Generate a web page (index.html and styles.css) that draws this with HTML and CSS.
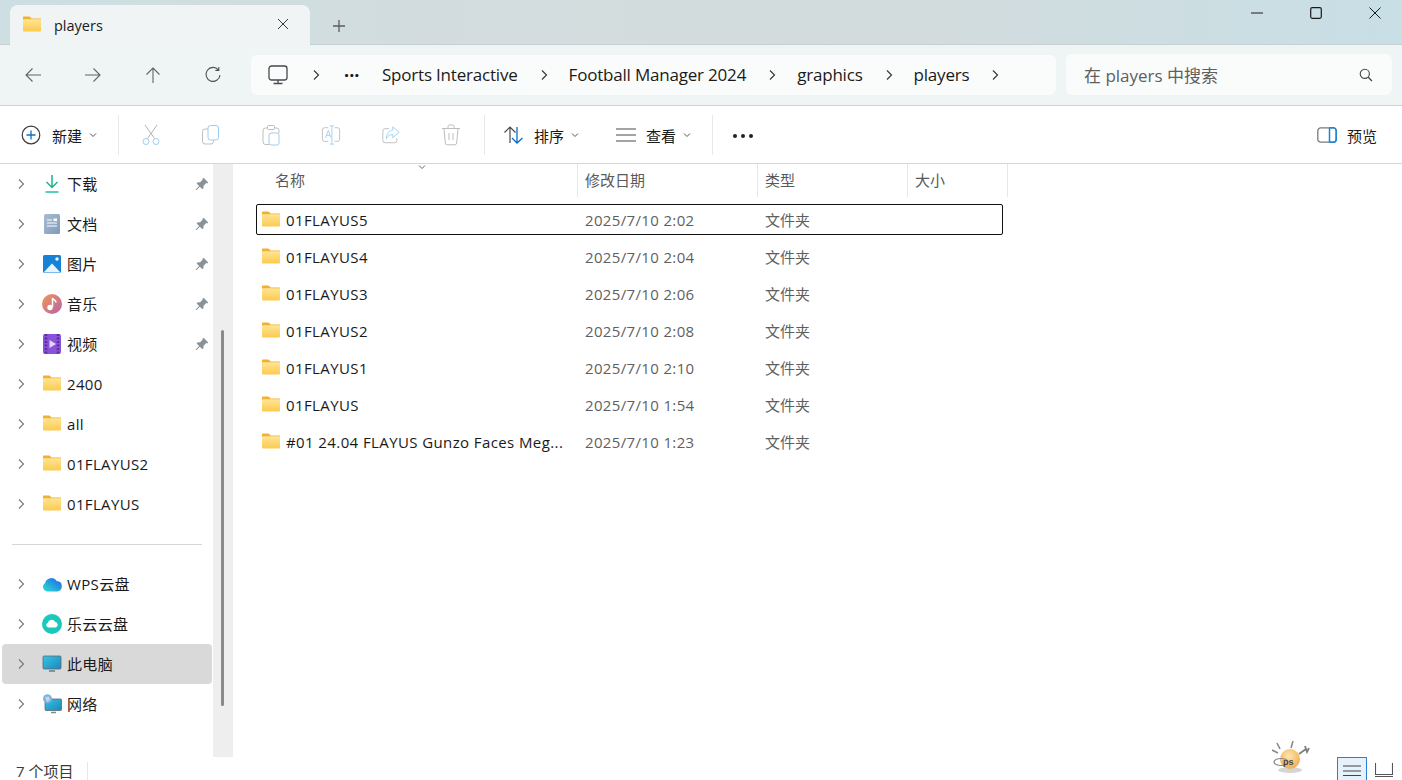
FILE: index.html
```html
<!DOCTYPE html>
<html lang="zh">
<head>
<meta charset="utf-8">
<title>players</title>
<link rel="stylesheet" href="styles.css">
</head>
<body>
<svg class="defs" width="0" height="0" aria-hidden="true">
  <defs>
    <linearGradient id="fg" x1="0" y1="0" x2="0" y2="1"><stop offset="0" stop-color="#ffe596"/><stop offset="1" stop-color="#fcca4e"/></linearGradient>
    <linearGradient id="pc" x1="0" y1="0" x2="1" y2="1"><stop offset="0" stop-color="#34c5e8"/><stop offset="1" stop-color="#1f86b8"/></linearGradient>
    <linearGradient id="mu" x1="0" y1="0" x2="1" y2="1"><stop offset="0" stop-color="#f09a55"/><stop offset="1" stop-color="#b760a8"/></linearGradient>
    <linearGradient id="cl" x1="0" y1="1" x2="1" y2="0"><stop offset="0" stop-color="#2ee0d0"/><stop offset="1" stop-color="#1a62e8"/></linearGradient>
    <linearGradient id="doc" x1="0" y1="0" x2="1" y2="1"><stop offset="0" stop-color="#a9bdd3"/><stop offset="1" stop-color="#7f9bbb"/></linearGradient>
    <symbol id="folder" viewBox="0 0 20 16"><path d="M1 3V1.600C1 1 1.400.600 2 .600h5c.500 0 .800.200 1.100.500L9.600 2.600H18c.600 0 1 .400 1 1V4H1z" fill="#f3b030"/><rect x="1" y="3.200" width="18" height="12.200" rx="1" fill="url(#fg)"/></symbol>
    <symbol id="chev" viewBox="0 0 10 12"><path d="M3 1.500 7.500 6 3 10.500" fill="none" stroke="currentColor" stroke-width="1.200"/></symbol>
    <symbol id="down" viewBox="0 0 8 6"><path d="M1 1.500 4 4.500 7 1.500" fill="none" stroke="currentColor" stroke-width="1"/></symbol>
    <symbol id="pin" viewBox="0 0 14 14"><path d="M8.600.800 13.200 5.400 12.200 6.400 11.200 6.100 8.600 8.700 8.500 11 7.300 12.200 4.800 9.700 1.600 12.900.900 12.900.900 12.200 4.100 9 1.600 6.500 2.800 5.300 5.100 5.200 7.700 2.600 7.500 1.800z" fill="#8a9299"/></symbol>
  </defs>
</svg>

<div class="window">
  <header class="titlebar">
    <div class="tab">
      <svg class="tab-folder"><use href="#folder"/></svg>
      <span class="tab-title">players</span>
      <svg class="tab-close" viewBox="0 0 12 12"><path d="M1 1 11 11M11 1 1 11" stroke="#3a3a3a" stroke-width="1"/></svg>
    </div>
    <svg class="tab-add" viewBox="0 0 12 12"><path d="M6 0V12M0 6H12" stroke="#5c5c5c" stroke-width="1.300"/></svg>
    <div class="winctl">
      <svg viewBox="0 0 12 12"><path d="M0 6H12" stroke="#1a1a1a" stroke-width="1"/></svg>
      <svg viewBox="0 0 12 12"><rect x=".700" y=".700" width="10.600" height="10.600" rx="1.500" fill="none" stroke="#1a1a1a" stroke-width="1.200"/></svg>
      <svg viewBox="0 0 12 12"><path d="M.500 .500 11.500 11.500M11.500 .500 .500 11.500" stroke="#1a1a1a" stroke-width="1"/></svg>
    </div>
  </header>

  <nav class="navbar">
    <div class="navbtns">
      <svg viewBox="0 0 18 18"><path d="M17 9H2M8.500 2.500 2 9l6.500 6.500" fill="none" stroke="#5f6568" stroke-width="1.100"/></svg>
      <svg viewBox="0 0 18 18"><path d="M1 9H16M9.500 2.500 16 9l-6.500 6.500" fill="none" stroke="#5f6568" stroke-width="1.100"/></svg>
      <svg viewBox="0 0 18 18"><path d="M9 17V2M2.500 8.500 9 2l6.500 6.500" fill="none" stroke="#5f6568" stroke-width="1.100"/></svg>
      <svg viewBox="0 0 18 18"><path d="M14.500 4A7 7 0 1 0 16 9M14.800 1V4.400H11.400" fill="none" stroke="#4b5053" stroke-width="1.100"/></svg>
    </div>
    <div class="address">
      <svg class="addr-pc" viewBox="0 0 20 20"><rect x="1" y="1" width="18" height="14" rx="2.500" fill="none" stroke="#454a4d" stroke-width="1.300"/><path d="M10 15V18M5.500 18.500H14.500" stroke="#454a4d" stroke-width="1.300"/></svg>
      <svg class="crumb-chev first"><use href="#chev"/></svg>
      <span class="addr-more">···</span>
      <span class="crumb">Sports Interactive</span>
      <svg class="crumb-chev"><use href="#chev"/></svg>
      <span class="crumb">Football Manager 2024</span>
      <svg class="crumb-chev"><use href="#chev"/></svg>
      <span class="crumb">graphics</span>
      <svg class="crumb-chev"><use href="#chev"/></svg>
      <span class="crumb">players</span>
      <svg class="crumb-chev"><use href="#chev"/></svg>
    </div>
    <div class="search">
      <span class="search-text">在 players 中搜索</span>
      <svg viewBox="0 0 14 14"><circle cx="5.800" cy="5.800" r="4.600" fill="none" stroke="#444" stroke-width="1.100"/><path d="M9.200 9.200 13 13" stroke="#444" stroke-width="1.300"/></svg>
    </div>
  </nav>

  <div class="toolbar">
    <div class="tb-item new">
      <svg class="tb-icon" viewBox="0 0 20 20"><circle cx="10" cy="10" r="8.800" fill="none" stroke="#3c3c3c" stroke-width="1.200"/><path d="M10 5.500V14.500M5.500 10H14.500" stroke="#0a6fc4" stroke-width="1.300"/></svg>
      <span>新建</span>
      <svg class="caret"><use href="#down"/></svg>
    </div>
    <i class="tb-sep"></i>
    <div class="tb-group">
      <svg viewBox="0 0 20 22"><path d="M4 1 13.500 14.500M16 1 6.500 14.500" stroke="#b3b3b3" fill="none"/><circle cx="5" cy="17.500" r="3" fill="none" stroke="#9fcdf0"/><circle cx="15" cy="17.500" r="3" fill="none" stroke="#9fcdf0"/></svg>
      <svg viewBox="0 0 20 22"><rect x="1.500" y="5" width="11" height="15" rx="2.500" fill="none" stroke="#bdbdbd"/><rect x="7" y="1.500" width="10.500" height="14.500" rx="2.500" fill="#fff" stroke="#9fcdf0"/></svg>
      <svg viewBox="0 0 20 22"><path d="M6 4H4.500A2.500 2.500 0 0 0 2 6.500V18a2.500 2.500 0 0 0 2.500 2.500H8M14 4h1.500A2.500 2.500 0 0 1 18 6.500V9" fill="none" stroke="#bdbdbd"/><rect x="6.500" y="1.500" width="7" height="4" rx="1" fill="none" stroke="#bdbdbd"/><rect x="8" y="9" width="10" height="12" rx="2" fill="#fff" stroke="#9fcdf0"/></svg>
      <svg viewBox="0 0 22 22"><path d="M8 3H4a2.500 2.500 0 0 0-2.500 2.500v10A2.500 2.500 0 0 0 4 18h4M15 3h3a2.500 2.500 0 0 1 2.500 2.500v10A2.500 2.500 0 0 1 18 18h-3" fill="none" stroke="#bdbdbd"/><path d="M12 1V21M9.500 1h5M9.500 21h5" stroke="#9fcdf0" fill="none"/><path d="M5 14 8 6l3 8M6 11.500h4" stroke="#9fcdf0" fill="none"/></svg>
      <svg viewBox="0 0 22 22"><path d="M9 4H4.500A2.500 2.500 0 0 0 2 6.500V17a2.500 2.500 0 0 0 2.500 2.500H15a2.500 2.500 0 0 0 2.500-2.500v-2.500" fill="none" stroke="#bdbdbd"/><path d="M13 2 20 8 13 14V10.500C9.500 10.500 7.500 12 6 15 6 10 8.500 6 13 5.500z" fill="#fff" stroke="#9fcdf0"/></svg>
      <svg viewBox="0 0 20 22"><path d="M1 4.500H19M7 4.500V2.500A1.500 1.500 0 0 1 8.500 1h3A1.500 1.500 0 0 1 13 2.500V4.500M3 4.500 4.300 19a2 2 0 0 0 2 1.800h7.400a2 2 0 0 0 2-1.800L17 4.500M8 9V16M12 9V16" fill="none" stroke="#bdbdbd"/></svg>
    </div>
    <i class="tb-sep"></i>
    <div class="tb-item sort">
      <svg class="tb-icon" viewBox="0 0 22 20"><path d="M7 18V2M1.500 7.500 7 2l5.500 5.500" fill="none" stroke="#4a4a4a" stroke-width="1.200"/><path d="M14 2V18M9 13 14 18l5.500-5" fill="none" stroke="#0a6fc4" stroke-width="1.300"/></svg>
      <span>排序</span>
      <svg class="caret"><use href="#down"/></svg>
    </div>
    <div class="tb-item view">
      <svg class="tb-icon" viewBox="0 0 20 14"><path d="M0 1H20M0 7H20M0 13H20" stroke="#4a4a4a" stroke-width="1.200"/></svg>
      <span>查看</span>
      <svg class="caret"><use href="#down"/></svg>
    </div>
    <i class="tb-sep"></i>
    <div class="tb-more"><b></b><b></b><b></b></div>
    <div class="tb-preview">
      <svg viewBox="0 0 20 16"><rect x=".800" y=".800" width="18.400" height="14.400" rx="3" fill="none" stroke="#7b7b7b" stroke-width="1.300"/><path d="M12.500 .800H16.200a3 3 0 0 1 3 3V12.200a3 3 0 0 1-3 3H12.500" fill="none" stroke="#1a86d8" stroke-width="1.500"/><path d="M12.500 .800V15.200" stroke="#1a86d8" stroke-width="1.500"/></svg>
      <span>预览</span>
    </div>
  </div>

  <div class="main">
    <aside class="sidebar">
      <div class="tree">
        <div class="tree-row"><svg class="tree-chev"><use href="#chev"/></svg>
          <svg class="tree-icon" viewBox="0 0 20 20"><path d="M10 1V13M4.500 8 10 13.500 15.500 8" fill="none" stroke="#1fb48f" stroke-width="1.500"/><path d="M3.500 18H16.500" stroke="#2cc4b0" stroke-width="1.600"/></svg>
          <span>下载</span><svg class="pin"><use href="#pin"/></svg></div>
        <div class="tree-row"><svg class="tree-chev"><use href="#chev"/></svg>
          <svg class="tree-icon" viewBox="0 0 20 20"><rect x="2" y="0" width="16" height="20" rx="1.500" fill="url(#doc)"/><path d="M5 6H10M5 9H15M5 12H15" stroke="#fff"/><rect x="11.500" y="4.500" width="3.500" height="2.500" fill="#fff"/></svg>
          <span>文档</span><svg class="pin"><use href="#pin"/></svg></div>
        <div class="tree-row"><svg class="tree-chev"><use href="#chev"/></svg>
          <svg class="tree-icon" viewBox="0 0 20 20"><rect x="1" y="1" width="18" height="18" rx="1.500" fill="#1582d8"/><circle cx="15" cy="5" r="1.700" fill="#fff"/><path d="M1.500 18.500 10 9.500 18.500 18.500z" fill="#e9f3fb"/></svg>
          <span>图片</span><svg class="pin"><use href="#pin"/></svg></div>
        <div class="tree-row"><svg class="tree-chev"><use href="#chev"/></svg>
          <svg class="tree-icon" viewBox="0 0 20 20"><circle cx="10" cy="10" r="10" fill="url(#mu)"/><path d="M10.500 4V13" stroke="#fff" stroke-width="1.500"/><path d="M10.500 4C11 6 14 6 14 8.500" fill="none" stroke="#fff" stroke-width="1.500"/><circle cx="8" cy="13.500" r="2.700" fill="#fff"/></svg>
          <span>音乐</span><svg class="pin"><use href="#pin"/></svg></div>
        <div class="tree-row"><svg class="tree-chev"><use href="#chev"/></svg>
          <svg class="tree-icon" viewBox="0 0 20 20"><rect x="1" y="0" width="18" height="20" rx="2" fill="#8a52d8"/><path d="M4 0V20M16 0V20" stroke="#5a2da0" stroke-width="2.500" stroke-dasharray="2 1.500"/><path d="M7.500 6 14 10 7.500 14z" fill="#e4d6f8"/></svg>
          <span>视频</span><svg class="pin"><use href="#pin"/></svg></div>
        <div class="tree-row"><svg class="tree-chev"><use href="#chev"/></svg><svg class="tree-folder"><use href="#folder"/></svg><span>2400</span></div>
        <div class="tree-row"><svg class="tree-chev"><use href="#chev"/></svg><svg class="tree-folder"><use href="#folder"/></svg><span>all</span></div>
        <div class="tree-row"><svg class="tree-chev"><use href="#chev"/></svg><svg class="tree-folder"><use href="#folder"/></svg><span>01FLAYUS2</span></div>
        <div class="tree-row"><svg class="tree-chev"><use href="#chev"/></svg><svg class="tree-folder"><use href="#folder"/></svg><span>01FLAYUS</span></div>
      </div>
      <div class="tree-divider"></div>
      <div class="tree">
        <div class="tree-row"><svg class="tree-chev"><use href="#chev"/></svg>
          <svg class="tree-icon" viewBox="0 0 20 20"><path d="M5 17.500A4.500 4.500 0 0 1 3 9.300 6.500 6.500 0 0 1 14.800 7 5.300 5.300 0 0 1 15.500 17.500z" fill="url(#cl)"/></svg>
          <span>WPS云盘</span></div>
        <div class="tree-row"><svg class="tree-chev"><use href="#chev"/></svg>
          <svg class="tree-icon" viewBox="0 0 20 20"><circle cx="10" cy="10" r="10" fill="#1cc8bb"/><path d="M6.500 13.500A2.500 2.500 0 0 1 5.800 8.700 4 4 0 0 1 13.300 8 2.800 2.800 0 0 1 13.500 13.500z" fill="#fff"/></svg>
          <span>乐云云盘</span></div>
        <div class="tree-row selected"><svg class="tree-chev"><use href="#chev"/></svg>
          <svg class="tree-icon" viewBox="0 0 20 20"><rect x="1" y="2" width="18" height="13" rx="1" fill="url(#pc)" stroke="#5b6b75" stroke-width=".800"/><path d="M7 17H13" stroke="#7c8a92" stroke-width="1.800"/></svg>
          <span>此电脑</span></div>
        <div class="tree-row"><svg class="tree-chev"><use href="#chev"/></svg>
          <svg class="tree-icon" viewBox="0 0 20 20"><rect x="3" y="5" width="16.500" height="11.500" rx="1" fill="url(#pc)" stroke="#5b6b75" stroke-width=".800"/><path d="M9 18.500H14" stroke="#7c8a92" stroke-width="1.500"/><circle cx="5.500" cy="4.800" r="4.500" fill="#7fb2dc"/><path d="M3 3 7 2.500 8 6 5 8z" fill="#bcd8ee"/></svg>
          <span>网络</span></div>
      </div>
    </aside>
    <div class="side-track"><div class="side-thumb"></div></div>

    <section class="list">
      <div class="list-head">
        <div class="col col-name">名称</div>
        <div class="col col-date">修改日期</div>
        <div class="col col-type">类型</div>
        <div class="col col-size">大小</div>
        <svg class="sort-mark"><use href="#down"/></svg>
      </div>
      <div class="rows">
        <div class="row focused"><svg class="row-folder"><use href="#folder"/></svg><span class="name">01FLAYUS5</span><span class="date">2025/7/10 2:02</span><span class="type">文件夹</span></div>
        <div class="row"><svg class="row-folder"><use href="#folder"/></svg><span class="name">01FLAYUS4</span><span class="date">2025/7/10 2:04</span><span class="type">文件夹</span></div>
        <div class="row"><svg class="row-folder"><use href="#folder"/></svg><span class="name">01FLAYUS3</span><span class="date">2025/7/10 2:06</span><span class="type">文件夹</span></div>
        <div class="row"><svg class="row-folder"><use href="#folder"/></svg><span class="name">01FLAYUS2</span><span class="date">2025/7/10 2:08</span><span class="type">文件夹</span></div>
        <div class="row"><svg class="row-folder"><use href="#folder"/></svg><span class="name">01FLAYUS1</span><span class="date">2025/7/10 2:10</span><span class="type">文件夹</span></div>
        <div class="row"><svg class="row-folder"><use href="#folder"/></svg><span class="name">01FLAYUS</span><span class="date">2025/7/10 1:54</span><span class="type">文件夹</span></div>
        <div class="row"><svg class="row-folder"><use href="#folder"/></svg><span class="name">#01 24.04 FLAYUS Gunzo Faces Meg...</span><span class="date">2025/7/10 1:23</span><span class="type">文件夹</span></div>
      </div>
    </section>
  </div>

  <footer class="status">
    <span class="count">7 个项目</span>
    <i class="status-sep"></i>
    <div class="viewswitch">
      <div class="vs vs-on"><svg viewBox="0 0 18 14"><path d="M0 2H18M0 7H18M0 11.500H18" stroke="#444" stroke-width="1.100"/></svg></div>
      <div class="vs vs-off"><svg viewBox="0 0 18 14"><path d="M.500 0V11.500H17.500V0M0 13.500H18" fill="none" stroke="#555" stroke-width="1.100"/></svg></div>
    </div>
  </footer>

  <svg class="bubble" viewBox="0 0 38 34">
    <defs><radialGradient id="bb" cx=".45" cy=".35" r=".7"><stop offset="0" stop-color="#ffe7b0"/><stop offset="1" stop-color="#f0a84a"/></radialGradient></defs>
    <ellipse cx="18" cy="29" rx="12" ry="3" fill="#d5d5d5"/>
    <path d="M5 2 8 8M21 0 19 7M0 9 6 12" stroke="#8a8a8a" stroke-width="1.600"/>
    <path d="M27 13 34 8M33 5 35 11 37 7" stroke="#7d7d7d" stroke-width="1.800" fill="none"/>
    <circle cx="18" cy="18" r="10" fill="url(#bb)"/>
    <ellipse cx="9" cy="21" rx="7" ry="3.500" fill="none" stroke="#8a8a8a" stroke-width="1.200"/>
    <text x="11" y="24" class="bubble-text">ps</text>
  </svg>
</div>
</body>
</html>
```
FILE: styles.css
```css
* { box-sizing: border-box; }
html, body { margin: 0; padding: 0; height: 100%; overflow: hidden; background: #fff; }
body { font-family: "Open Sans", "Noto Sans CJK SC", sans-serif; color: #1a1a1a; }
.defs { position: absolute; }
svg { display: block; flex: none; }

.window { position: relative; width: 1402px; height: 780px; display: flex; flex-direction: column; overflow: hidden; }

/* title bar */
.titlebar { height: 45px; flex: none; display: flex; align-items: flex-start; padding: 5px 0 0 10px; background: linear-gradient(90deg, #cddfe3 0%, #d3dcde 35%, #d3dcdd 65%, #c8dfe6 100%); border-bottom: 1px solid #c6d0d2; }
.tab { width: 300px; height: 40px; background: #f0f4f5; border-radius: 8px 8px 0 0; display: flex; align-items: center; padding: 0 21px 0 12px; }
.tab-folder { width: 20px; height: 16px; margin-top: -2px; }
.tab-title { margin-left: 12px; font-size: 14.500px; flex: 1; }
.tab-close { width: 12px; height: 12px; margin-top: -2px; }
.tab-add { width: 12px; height: 12px; margin: 15px 0 0 23px; }
.winctl { margin-left: auto; display: flex; gap: 47px; padding: 2px 21px 0 0; }
.winctl svg { width: 12px; height: 12px; }

/* nav bar */
.navbar { height: 61px; flex: none; display: flex; align-items: center; background: #eff4f5; border-bottom: 1px solid #cdd3d4; padding-left: 24px; }
.navbtns { display: flex; gap: 42px; width: 227px; }
.navbtns svg { width: 18px; height: 18px; }
.address { width: 805px; height: 40px; background: #fafcfc; border-radius: 6px; display: flex; align-items: center; padding-left: 17px; margin-top: -1px; }
.addr-pc { width: 20px; height: 20px; }
.crumb-chev { width: 10px; height: 12px; color: #3a3a3a; margin: 0 20px 0 21px; }
.crumb-chev.first { margin: 0 23px 0 23px; }
.addr-more { font-size: 18px; width: 38px; font-weight: 700; line-height: 1; }
.crumb { font-size: 17px; letter-spacing: -.200px; white-space: nowrap; }
.search { width: 326px; height: 41px; margin-left: 10px; margin-top: -1px; background: #fafcfc; border-radius: 6px; display: flex; align-items: center; justify-content: space-between; padding: 0 19px 0 18px; }
.search-text { font-size: 17px; color: #5f5f5f; }
.search svg { width: 14px; height: 14px; }

/* toolbar */
.toolbar { height: 58px; flex: none; display: flex; align-items: center; border-bottom: 1px solid #d4d6d7; background: #fff; padding-left: 21px; font-size: 15px; }
.tb-item { display: flex; align-items: center; }
.tb-item span { margin-left: 11px; padding-top: 2px; }
.tb-icon { width: 20px; height: 20px; }
.caret { width: 8px; height: 6px; margin-left: 7px; color: #555; }
.tb-sep { width: 1px; height: 40px; background: #e6e8e9; flex: none; }
.new { margin-right: 21px; }
.tb-group { display: flex; align-items: center; gap: 40px; width: 365px; padding-left: 22px; }
.tb-group svg { width: 20px; height: 22px; }
.sort { margin-left: 18px; }
.sort .tb-icon { width: 22px; height: 20px; }
.sort span { margin-left: 9px; }
.view { margin-left: 37px; margin-right: 21px; }
.view .tb-icon { height: 14px; }
.view span { margin-left: 10px; }
.tb-more { display: flex; gap: 4px; margin-left: 20px; padding-top: 2px; }
.tb-more b { width: 4px; height: 4px; border-radius: 50%; background: #222; }
.tb-preview { margin-left: auto; margin-right: 25px; display: flex; align-items: center; gap: 10px; }
.tb-preview svg { width: 20px; height: 16px; }
.tb-preview span { padding-top: 2px; }

/* main */
.main { flex: 1; min-height: 0; display: flex; }
.sidebar { width: 213px; flex: none; padding: 0 1px 0 2px; font-size: 15px; }
.tree-row { height: 40px; display: flex; align-items: center; border-radius: 4px; position: relative; padding-left: 14px; }
.tree-row.selected { background: #d9d9d9; }
.tree-chev { width: 10px; height: 12px; color: #7a7a7a; }
.tree-icon { width: 20px; height: 20px; margin-left: 16px; }
.tree-folder { width: 20px; height: 16px; margin-left: 16px; margin-top: -2px; }
.tree-row span { margin-left: 5px; white-space: nowrap; letter-spacing: .350px; padding-bottom: 2px; }
.tree-folder + span { padding-bottom: 0; }
.pin { width: 14px; height: 14px; margin-left: auto; margin-right: 3px; }
.tree-divider { height: 1px; margin: 20px 10px 19px 10px; background: #d7d7d7; }
.side-track { width: 20px; flex: none; background: #eeeeee; position: relative; }
.side-thumb { position: absolute; left: 8px; top: 166px; width: 3px; height: 376px; background: #8a8a8a; border-radius: 2px; }

.list { flex: 1; position: relative; }
.list-head { height: 33px; display: flex; font-size: 15px; color: #5a5a5a; padding-left: 34px; position: relative; }
.col { border-right: 1px solid #e6e6e6; padding-left: 8px; display: flex; align-items: center; padding-bottom: 2px; }
.col-name { width: 311px; }
.col-date { width: 180px; padding-left: 7px; }
.col-type { width: 150px; padding-left: 7px; }
.col-size { width: 100px; padding-left: 7px; }
.sort-mark { position: absolute; left: 185px; top: 0; width: 8px; height: 6px; color: #666; }
.rows { padding: 7px 0 0 23px; }
.row { width: 747px; height: 37px; display: flex; align-items: center; font-size: 15px; }
.row.focused { height: 31px; margin-bottom: 3px; border: 1px solid #111; border-radius: 2px; }
.row-folder { width: 20px; height: 16px; margin-left: 5px; margin-top: -2px; }
.focused .row-folder { margin-left: 4px; }
.name { width: 299px; margin-left: 5px; white-space: nowrap; letter-spacing: .400px; }
.date { width: 180px; color: #5f5f5f; letter-spacing: .350px; }
.type { color: #5f5f5f; padding-bottom: 1px; }

/* status */
.status { height: 23px; flex: none; display: flex; align-items: flex-start; padding-left: 16px; font-size: 15px; color: #3a3a3a; background: #fff; }
.count { line-height: 28px; width: 71px; }
.status-sep { width: 1px; height: 23px; margin-top: 5px; background: #e6e6e6; }
.viewswitch { margin-left: auto; margin-right: 9px; display: flex; gap: 8px; }
.vs { width: 30px; height: 24px; display: flex; align-items: center; justify-content: center; padding-top: 2px; }
.vs-on { background: #e5f1fb; border: 1px solid #2a7fd0; border-bottom: 0; }
.vs-off { width: 18px; }
.vs svg { width: 18px; height: 14px; }

.bubble { position: absolute; left: 1272px; top: 741px; width: 38px; height: 34px; }
.bubble-text { font-family: "Liberation Sans", sans-serif; font-size: 9px; font-weight: 700; fill: #444; }
```
